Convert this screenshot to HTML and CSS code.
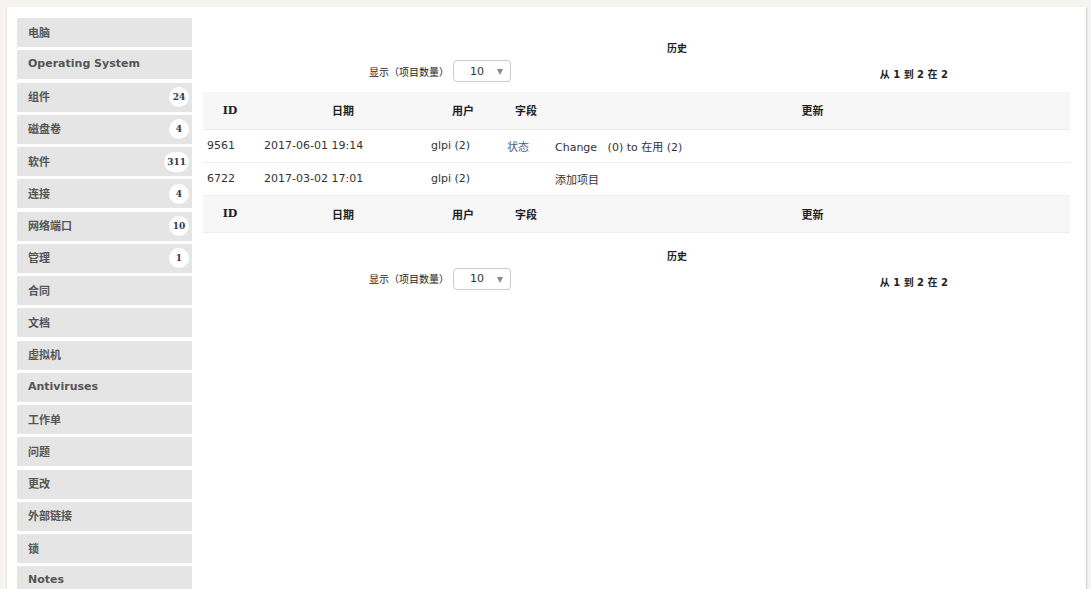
FILE: index.html
```html
<!DOCTYPE html>
<html lang="zh-CN">
<head>
    <meta charset="UTF-8">
    <title>历史</title>
    <link rel="stylesheet" href="styles.css">
</head>
<body>
    <div class="page">
        <ul class="tabs">
            <li class="tab">电脑</li>
            <li class="tab">Operating System</li>
            <li class="tab">组件 <span class="badge">24</span></li>
            <li class="tab">磁盘卷 <span class="badge">4</span></li>
            <li class="tab">软件 <span class="badge">311</span></li>
            <li class="tab">连接 <span class="badge">4</span></li>
            <li class="tab">网络端口 <span class="badge">10</span></li>
            <li class="tab">管理 <span class="badge">1</span></li>
            <li class="tab">合同</li>
            <li class="tab">文档</li>
            <li class="tab">虚拟机</li>
            <li class="tab">Antiviruses</li>
            <li class="tab">工作单</li>
            <li class="tab">问题</li>
            <li class="tab">更改</li>
            <li class="tab">外部链接</li>
            <li class="tab">锁</li>
            <li class="tab">Notes</li>
        </ul>

        <div class="content">
            <div class="pager pager-top">
                <div class="pager-title">历史</div>
                <div class="pager-row">
                    <div class="limit">
                        <span>显示（项目数量）</span>
                        <div class="select"><span>10</span><span class="arrow"></span></div>
                    </div>
                    <div class="count">从 1 到 2 在 2</div>
                </div>
            </div>

            <table class="history">
                <thead>
                    <tr>
                        <th class="id">ID</th>
                        <th>日期</th>
                        <th>用户</th>
                        <th>字段</th>
                        <th>更新</th>
                    </tr>
                </thead>
                <tbody>
                    <tr>
                        <td>9561</td>
                        <td>2017-06-01 19:14</td>
                        <td>glpi (2)</td>
                        <td class="field">状态</td>
                        <td>Change &nbsp; (0) to 在用 (2)</td>
                    </tr>
                    <tr>
                        <td>6722</td>
                        <td>2017-03-02 17:01</td>
                        <td>glpi (2)</td>
                        <td></td>
                        <td>添加项目</td>
                    </tr>
                </tbody>
                <tfoot>
                    <tr>
                        <th class="id">ID</th>
                        <th>日期</th>
                        <th>用户</th>
                        <th>字段</th>
                        <th>更新</th>
                    </tr>
                </tfoot>
            </table>

            <div class="pager pager-bottom">
                <div class="pager-title">历史</div>
                <div class="pager-row">
                    <div class="limit">
                        <span>显示（项目数量）</span>
                        <div class="select"><span>10</span><span class="arrow"></span></div>
                    </div>
                    <div class="count">从 1 到 2 在 2</div>
                </div>
            </div>
        </div>
    </div>
</body>
</html>
```

FILE: styles.css
```css
* {
    margin: 0;
    padding: 0;
    box-sizing: border-box;
}

body {
    background: #f5f4f0;
    font-family: "DejaVu Sans", "Noto Sans CJK SC", sans-serif;
    font-size: 11px;
    color: #333;
    overflow: hidden;
}

.page {
    display: flex;
    margin: 7px 5px 0 6px;
    min-height: 620px;
    background: white;
    border-left: 1px solid #e6e3de;
    box-shadow: 2px 0 1px -1px #d6d3ce;
}

.tabs {
    list-style: none;
    width: 185px;
    padding: 11px 0 0 10px;
    display: flex;
    flex-direction: column;
    gap: 3.25px;
}

.tab {
    display: flex;
    align-items: center;
    justify-content: space-between;
    height: 29px;
    padding: 0 3px 2px 11px;
    background: #e5e5e5;
    color: #555;
    font-weight: bold;
    font-size: 11px;
}

.badge {
    min-width: 20px;
    height: 20px;
    padding: 0 3px;
    margin-top: 2px;
    border-radius: 10px;
    background: white;
    color: #2f3a4a;
    font-family: "DejaVu Serif", serif;
    font-size: 9px;
    font-weight: bold;
    display: flex;
    align-items: center;
    justify-content: center;
}

.content {
    flex: 1;
    padding: 0 16px 0 11px;
}

.pager-top {
    padding-top: 36px;
    margin-bottom: 10px;
}

.pager-bottom {
    padding-top: 18px;
}

.pager-title {
    padding-left: 81px;
    text-align: center;
    font-size: 10px;
    font-weight: bold;
    line-height: 12px;
    color: #222;
}

.pager-row {
    display: flex;
    justify-content: space-between;
    align-items: flex-end;
    padding: 5px 122px 0 166px;
}

.limit {
    display: flex;
    align-items: center;
    gap: 4px;
    font-size: 10px;
    color: #222;
}

.select {
    width: 58px;
    height: 22px;
    border: 1px solid #ccc;
    border-radius: 4px;
    display: flex;
    align-items: center;
    justify-content: space-between;
    padding: 0 7px 0 16px;
    font-size: 11px;
    color: #333;
}

.arrow {
    width: 0;
    height: 0;
    border-left: 3.5px solid transparent;
    border-right: 3.5px solid transparent;
    border-top: 6px solid #888;
    margin-top: 2px;
}

.count {
    font-size: 10px;
    font-weight: bold;
    color: #222;
    padding-bottom: 1px;
}

.history {
    width: 100%;
    border-collapse: collapse;
}

.history th {
    height: 37px;
    background: #f7f7f7;
    border-bottom: 1px solid #ececec;
    font-size: 11px;
    font-weight: bold;
    color: #222;
    text-align: center;
}

.history th.id {
    font-family: "DejaVu Serif", serif;
}

.history th:nth-child(1) { width: 54px; }
.history th:nth-child(2) { width: 172px; }
.history th:nth-child(3) { width: 68px; }
.history th:nth-child(4) { width: 58px; }

.history td {
    height: 33px;
    border-bottom: 1px solid #eee;
    color: #333;
    white-space: nowrap;
}

.history td:nth-child(1) { padding-left: 4px; }
.history td:nth-child(2) { padding-left: 7px; }
.history td:nth-child(3) { padding-left: 2px; }
.history td:nth-child(4) { padding-left: 10px; }
.history td:nth-child(5) { padding-left: 0; }

.history .field {
    color: #46617f;
}
```
